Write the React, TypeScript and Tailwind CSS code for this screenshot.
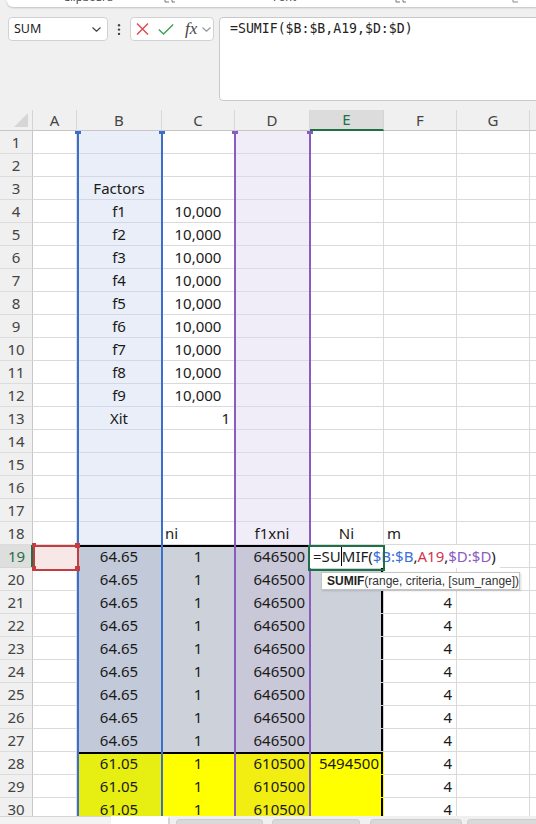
import React from 'react';

type Col = 'A' | 'B' | 'C' | 'D' | 'E' | 'F' | 'G' | 'H';
const COLS: Col[] = ['A', 'B', 'C', 'D', 'E', 'F', 'G', 'H'];
const WIDTH: Record<Col, string> = {
  A: 'w-[44px]',
  B: 'w-[85px]',
  C: 'w-[73px]',
  D: 'w-[75px]',
  E: 'w-[74px]',
  F: 'w-[73px]',
  G: 'w-[73px]',
  H: 'w-[80px]',
};

type Content = { t: string; a: 'l' | 'c' | 'r' };

function content(r: number, c: Col): Content | null {
  if (c === 'B') {
    if (r === 3) return { t: 'Factors', a: 'c' };
    if (r >= 4 && r <= 12) return { t: `f${r - 3}`, a: 'c' };
    if (r === 13) return { t: 'Xit', a: 'c' };
    if (r >= 19 && r <= 27) return { t: '64.65', a: 'c' };
    if (r >= 28) return { t: '61.05', a: 'c' };
  }
  if (c === 'C') {
    if (r >= 4 && r <= 12) return { t: '10,000', a: 'c' };
    if (r === 13) return { t: '1', a: 'r' };
    if (r === 18) return { t: 'ni', a: 'l' };
    if (r >= 19) return { t: '1', a: 'c' };
  }
  if (c === 'D') {
    if (r === 18) return { t: 'f1xni', a: 'c' };
    if (r >= 19 && r <= 27) return { t: '646500', a: 'r' };
    if (r >= 28) return { t: '610500', a: 'r' };
  }
  if (c === 'E') {
    if (r === 18) return { t: 'Ni', a: 'c' };
    if (r === 28) return { t: '5494500', a: 'r' };
  }
  if (c === 'F') {
    if (r === 18) return { t: 'm', a: 'l' };
    if (r >= 21) return { t: '4', a: 'r' };
  }
  return null;
}

const WHITE = 'bg-white border-[#dadada]';

function fill(r: number, c: Col): string {
  const top = r === 19 || r === 28;
  if (c === 'B') {
    if (r <= 18) return 'bg-[#e9eef8] border-[#d3d9e4]';
    if (r <= 27)
      return top
        ? 'bg-[#c2cad9] border-[#c2cad9] shadow-[inset_0_2px_0_#000]'
        : 'bg-[#c2cad9] border-[#c2cad9]';
    return top
      ? 'bg-[#e7ee12] border-[#e7ee12] shadow-[inset_0_2px_0_#000]'
      : 'bg-[#e7ee12] border-[#e7ee12]';
  }
  if (c === 'C') {
    if (r <= 18) return WHITE;
    if (r <= 27)
      return top
        ? 'bg-[#cdd1da] border-[#cdd1da] shadow-[inset_0_2px_0_#000]'
        : 'bg-[#cdd1da] border-[#cdd1da]';
    return top
      ? 'bg-[#ffff00] border-[#ffff00] shadow-[inset_0_2px_0_#000]'
      : 'bg-[#ffff00] border-[#ffff00]';
  }
  if (c === 'D') {
    if (r <= 18) return 'bg-[#f0edf8] border-[#dcd8e6]';
    if (r <= 27)
      return top
        ? 'bg-[#c9c8d8] border-[#c9c8d8] shadow-[inset_0_2px_0_#000]'
        : 'bg-[#c9c8d8] border-[#c9c8d8]';
    return top
      ? 'bg-[#f2ee12] border-[#f2ee12] shadow-[inset_0_2px_0_#000]'
      : 'bg-[#f2ee12] border-[#f2ee12]';
  }
  if (c === 'E') {
    if (r <= 18) return WHITE;
    if (r <= 27)
      return top
        ? 'bg-[#cdd1da] border-[#cdd1da] shadow-[inset_0_2px_0_#000,inset_-2px_0_0_#000]'
        : 'bg-[#cdd1da] border-[#cdd1da] shadow-[inset_-2px_0_0_#000]';
    return top
      ? 'bg-[#ffff00] border-[#ffff00] shadow-[inset_0_2px_0_#000,inset_-2px_0_0_#000]'
      : 'bg-[#ffff00] border-[#ffff00] shadow-[inset_-2px_0_0_#000]';
  }
  return WHITE;
}

const ALIGN = {
  l: 'justify-start pl-[3px]',
  c: 'justify-center',
  r: 'justify-end pr-[4px]',
};

function Launcher() {
  return (
    <svg width="12" height="7" viewBox="0 0 12 7" className="block">
      <path d="M1 0 V2 H5" stroke="#777" strokeWidth="1" fill="none" />
      <path d="M8 0 V2 H11" stroke="#777" strokeWidth="1" fill="none" />
    </svg>
  );
}

function Chevron({ color, w, h }: { color: string; w: number; h: number }) {
  return (
    <svg width={w} height={h} viewBox={`0 0 ${w} ${h}`} className="block">
      <path
        d={`M0.8 0.8 L${w / 2} ${h - 0.8} L${w - 0.8} 0.8`}
        stroke={color}
        strokeWidth="1.2"
        fill="none"
        strokeLinecap="round"
        strokeLinejoin="round"
      />
    </svg>
  );
}

export default function App() {
  const rows = Array.from({ length: 30 }, (_, i) => i + 1);
  return (
    <div className="w-[536px] h-[824px] overflow-hidden bg-[#f0f0f0] flex flex-col text-[#1f1f1f] font-['Noto_Sans','Liberation_Sans',sans-serif]">
      {/* Ribbon remnant */}
      <div className="h-[8px] shrink-0 pl-[7px]">
        <div className="h-[7px] bg-white rounded-bl-[6px] shadow-[0_1px_2px_rgba(0,0,0,0.2)] overflow-hidden flex items-start text-[11px] leading-[12px] text-[#444]">
          <div className="w-[56px] shrink-0" />
          <div className="w-[101px] shrink-0 -mt-[9px] whitespace-nowrap">Clipboard</div>
          <div className="w-[109px] shrink-0">
            <Launcher />
          </div>
          <div className="w-[122px] shrink-0 -mt-[9px] whitespace-nowrap">Font</div>
          <div className="w-[117px] shrink-0">
            <Launcher />
          </div>
          <div className="w-[10px] shrink-0">
            <svg width="8" height="7" viewBox="0 0 8 7" className="block">
              <path d="M1 0 V2 H6" stroke="#888" strokeWidth="1" fill="none" />
            </svg>
          </div>
        </div>
      </div>

      {/* Formula bar */}
      <div className="mt-[9px] h-[84px] shrink-0 flex items-start">
        <div className="ml-[8px] w-[100px] h-[24px] shrink-0 bg-white border border-[#d1d1d1] rounded-[4px] flex items-center justify-between pl-[5px] pr-[6px] text-[12.5px] text-[#222]">
          <span>SUM</span>
          <Chevron color="#444" w={9} h={5} />
        </div>
        <div className="w-[22px] h-[24px] shrink-0 flex items-center justify-center">
          <svg width="4" height="24" viewBox="0 0 4 24" className="block">
            <circle cx="2" cy="8.3" r="1.2" fill="#444" />
            <circle cx="2" cy="12.6" r="1.2" fill="#444" />
            <circle cx="2" cy="16.9" r="1.2" fill="#444" />
          </svg>
        </div>
        <div className="w-[84px] h-[24px] shrink-0 bg-white border border-[#d1d1d1] rounded-[4px] flex items-center pl-[5px]">
          <svg width="13" height="12" viewBox="0 0 13 12" className="block">
            <path d="M1 0.5 L12 11.5 M12 0.5 L1 11.5" stroke="#e0474c" strokeWidth="1.4" fill="none" />
          </svg>
          <svg width="16" height="11" viewBox="0 0 16 11" className="block ml-[9px]">
            <path d="M0.8 5.5 L5.5 10 L15.2 0.6" stroke="#3f9f55" strokeWidth="1.4" fill="none" />
          </svg>
          <span className="ml-[11px] font-['Liberation_Serif',serif] italic text-[17px] leading-[20px] text-[#444]">
            fx
          </span>
          <span className="ml-[5px]">
            <Chevron color="#9a9a9a" w={9} h={5} />
          </span>
        </div>
        <div className="ml-[5px] w-[340px] h-[84px] shrink-0 bg-white border border-[#c9c9c9] rounded-[4px] pl-[10px] pt-[1px] font-['DejaVu_Sans_Mono',monospace] text-[13.2px] leading-[20px] text-[#222] whitespace-nowrap">
          =SUMIF($B:$B,A19,$D:$D)
        </div>
      </div>

      {/* Column header */}
      <div className="mt-[9px] h-[21px] shrink-0 flex text-[15px] text-[#444]">
        <div className="w-[33px] shrink-0 border-r border-b border-r-[#d4d4d4] border-b-[#c6c6c6] flex items-end justify-end pr-[4px] pb-[3px]">
          <svg width="14" height="14" viewBox="0 0 14 14" className="block">
            <polygon points="0,14 14,14 14,0" fill="#d6d6d6" />
          </svg>
        </div>
        {COLS.map((c) =>
          c === 'E' ? (
            <div
              key={c}
              className={`${WIDTH[c]} shrink-0 bg-[#dcdcdc] border-r border-r-[#d4d4d4] border-b-2 border-b-[#1e7145] text-[#1e7145] flex items-center justify-center`}
            >
              {c}
            </div>
          ) : (
            <div
              key={c}
              className={`${WIDTH[c]} shrink-0 border-r border-b border-r-[#d8d8d8] border-b-[#c6c6c6] flex items-center justify-center`}
            >
              {c === 'H' ? '' : c}
            </div>
          )
        )}
      </div>

      {/* Body */}
      <div className="relative h-[685px] shrink-0 overflow-hidden text-[15px]">
        {rows.map((r) => (
          <div key={r} className="h-[23px] flex">
            <div
              className={
                r === 19
                  ? 'w-[33px] shrink-0 border-b border-[#d6d6d6] bg-[#dedede] text-[#1e7145] shadow-[inset_-2px_0_0_#1e7145] flex items-center justify-center'
                  : 'w-[33px] shrink-0 border-r border-b border-r-[#c8c8c8] border-b-[#dcdcdc] text-[#444] flex items-center justify-center'
              }
            >
              {r}
            </div>
            {COLS.map((c) => {
              const ct = content(r, c);
              return (
                <div
                  key={c}
                  className={`${WIDTH[c]} shrink-0 border-r border-b flex items-center whitespace-nowrap overflow-hidden text-[#1a1a1a] ${fill(r, c)} ${ct ? ALIGN[ct.a] : ''}`}
                >
                  {ct ? ct.t : ''}
                </div>
              );
            })}
          </div>
        ))}

        {/* Range highlight outlines for $B:$B and $D:$D */}
        <div className="absolute top-0 bottom-0 left-[77px] w-[2px] bg-[#3c6fcb]" />
        <div className="absolute top-0 bottom-0 left-[161px] w-[2px] bg-[#3c6fcb]" />
        <div className="absolute top-0 bottom-0 left-[234px] w-[2px] bg-[#8b5cc0]" />
        <div className="absolute top-0 bottom-0 left-[309px] w-[2px] bg-[#8b5cc0]" />
        <div className="absolute top-0 left-[75px] w-[6px] h-[3px] bg-[#3c6fcb]" />
        <div className="absolute top-0 left-[159px] w-[6px] h-[3px] bg-[#3c6fcb]" />
        <div className="absolute top-0 left-[232px] w-[6px] h-[3px] bg-[#8b5cc0]" />
        <div className="absolute top-0 left-[307px] w-[6px] h-[3px] bg-[#8b5cc0]" />

        {/* A19 reference highlight */}
        <div className="absolute left-[33px] top-[414px] w-[46px] h-[26px] border-2 border-[#c43b40] bg-[#f8e7e7]" />
        <div className="absolute left-[32px] top-[412px] w-[4px] h-[4px] bg-[#c43b40]" />
        <div className="absolute left-[75px] top-[412px] w-[5px] h-[5px] bg-[#c43b40]" />
        <div className="absolute left-[75px] top-[435px] w-[5px] h-[5px] bg-[#c43b40]" />
        <div className="absolute left-[32px] top-[435px] w-[4px] h-[5px] bg-[#c43b40]" />

        {/* E19 in-cell edit */}
        <div className="absolute left-[310px] top-[414px] w-[190px] h-[23px] bg-white flex items-center pl-[3px] whitespace-nowrap text-[#1a1a1a]">
          <span>=SU</span>
          <span className="inline-block w-0 h-[19px] border-l border-black" />
          <span>MIF(</span>
          <span className="text-[#3a6fd6]">$B:$B</span>
          <span>,</span>
          <span className="text-[#d6334b]">A19</span>
          <span>,</span>
          <span className="text-[#8d5ac5]">$D:$D</span>
          <span>)</span>
        </div>
        <div className="absolute left-[308px] top-[414px] w-[77px] h-[26px] border-2 border-[#1e7145]" />

        {/* Function tooltip */}
        <div className="absolute left-[321px] top-[441px] w-[199px] h-[18px] bg-white border border-[#c4c4c4] shadow-[1px_1px_2px_rgba(0,0,0,0.15)] flex items-center pl-[5px] whitespace-nowrap font-['Liberation_Sans',sans-serif] text-[12px] text-[#333]">
          <span className="font-bold text-[#222]">SUMIF</span>
          <span>(range, criteria, [sum_range])</span>
        </div>
      </div>

      {/* Bottom bar */}
      <div className="h-[8px] shrink-0 flex">
        <div className="w-[111px] shrink-0 bg-[#f3f3f3] border-t border-[#d6d6d6]" />
        <div className="w-[57px] shrink-0 bg-white" />
        <div className="w-[2px] shrink-0 bg-[#d4d4d4] mt-[2px]" />
        <div className="flex-1 bg-[#f0f0f0] flex items-end pt-[3px]">
          <div className="ml-[6px] w-[87px] h-[5px] shrink-0 bg-[#d9d9d9] border border-b-0 border-[#cdcdcd] rounded-t-[4px]" />
          <div className="ml-[9px] w-[88px] h-[5px] shrink-0 bg-[#d9d9d9] border border-b-0 border-[#cdcdcd] rounded-t-[4px]" />
          <div className="ml-[10px] w-[92px] h-[5px] shrink-0 bg-[#d9d9d9] border border-b-0 border-[#cdcdcd] rounded-t-[4px]" />
          <div className="ml-[5px] w-[80px] h-[5px] shrink-0 bg-[#d9d9d9] border border-b-0 border-[#cdcdcd] rounded-t-[4px]" />
        </div>
      </div>
    </div>
  );
}
